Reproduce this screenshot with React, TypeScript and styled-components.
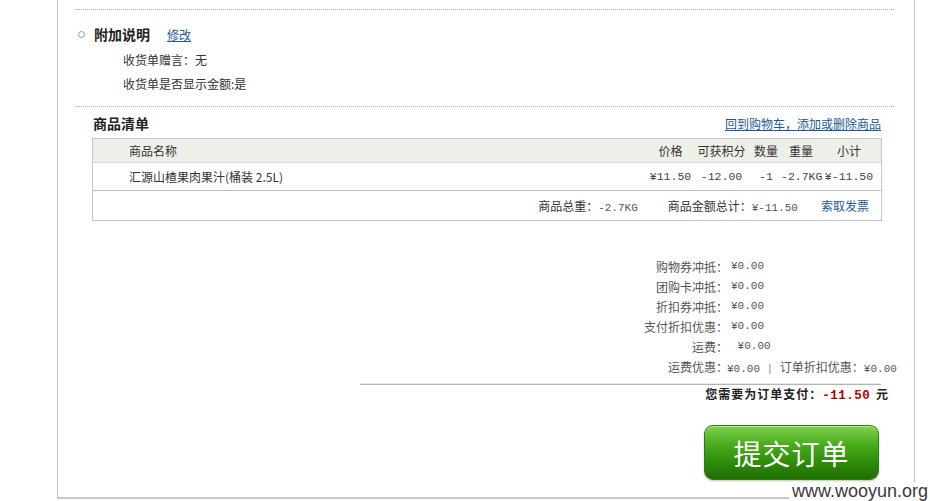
import React from 'react';
import styled, { createGlobalStyle } from 'styled-components';

const TEXT = '#333333';
const MUTED = '#555555';
const LINK = '#1d5a95';
const CJK = '"Noto Sans CJK SC", "Liberation Sans", sans-serif';
const NUM = '"Liberation Mono", "Noto Sans CJK SC", monospace';

const GlobalStyle = createGlobalStyle`
  html, body {
    margin: 0;
    padding: 0;
    background: #ffffff;
  }
  body {
    width: 930px;
    height: 501px;
    overflow: hidden;
    font-family: ${CJK};
    font-size: 12px;
    color: ${TEXT};
  }
`;

const summaryRows = [
  { label: '购物券冲抵：', value: '¥0.00' },
  { label: '团购卡冲抵：', value: '¥0.00' },
  { label: '折扣券冲抵：', value: '¥0.00' },
  { label: '支付折扣优惠：', value: '¥0.00' },
  { label: '运费：', value: ' ¥0.00' },
];

export default function App() {
  return (
    <Page>
      <GlobalStyle />
      <Panel>
        <Dotted />
        <NoteHead>
          <Bullet />
          <SectionTitle>附加说明</SectionTitle>
          <EditLink href="#">修改</EditLink>
        </NoteHead>
        <NoteBlock>
          <NoteLine>收货单赠言：无</NoteLine>
          <NoteLine>收货单是否显示金额:是</NoteLine>
        </NoteBlock>
        <Dotted $top={10} />

        <GoodsHead>
          <SectionTitle>商品清单</SectionTitle>
          <CartLink href="#">回到购物车，添加或删除商品</CartLink>
        </GoodsHead>

        <GoodsTable>
          <HeadRow>
            <NameCell>商品名称</NameCell>
            <Col $w={43}>价格</Col>
            <Col $w={59}>可获积分</Col>
            <Col $w={30}>数量</Col>
            <Col $w={40}>重量</Col>
            <Col $w={56}>小计</Col>
          </HeadRow>
          <ItemRow>
            <NameCell>汇源山楂果肉果汁(桶装 2.5L)</NameCell>
            <NumCol $w={43}>¥11.50</NumCol>
            <NumCol $w={59}>-12.00</NumCol>
            <NumCol $w={30}>-1</NumCol>
            <NumCol $w={40}>-2.7KG</NumCol>
            <NumCol $w={56}>¥-11.50</NumCol>
          </ItemRow>
          <TotalRow>
            <span>
              商品总重：<Num>-2.7KG</Num>
            </span>
            <span>
              商品金额总计：<Num>¥-11.50</Num>
            </span>
            <InvoiceLink href="#">索取发票</InvoiceLink>
          </TotalRow>
        </GoodsTable>

        <Summary>
          {summaryRows.map((r) => (
            <React.Fragment key={r.label}>
              <SumLabel>{r.label}</SumLabel>
              <SumValue>{r.value}</SumValue>
            </React.Fragment>
          ))}
          <SumLabel>运费优惠：</SumLabel>
          <SumValue $shift={-4}>
            ¥0.00 <Sep>|</Sep> <Cjk>订单折扣优惠：</Cjk>¥0.00
          </SumValue>
        </Summary>
        <Rule />
        <PayLine>
          您需要为订单支付：<PayAmount>-11.50</PayAmount> 元
        </PayLine>
        <SubmitRow>
          <SubmitButton type="button">提交订单</SubmitButton>
        </SubmitRow>
      </Panel>
      <Watermark>www.wooyun.org</Watermark>
    </Page>
  );
}

const Page = styled.div`
  position: relative;
  width: 930px;
  height: 501px;
  padding-left: 57px;
  box-sizing: border-box;
`;

const Panel = styled.div`
  width: 858px;
  height: 499px;
  box-sizing: border-box;
  border: 1px solid #c4c4c4;
  border-top: none;
  border-bottom: 2px solid #c8c8c8;
  display: flex;
  flex-direction: column;
`;

const Dotted = styled.div<{ $top?: number }>`
  margin: ${(p) => p.$top ?? 9}px 20px 0 17px;
  height: 0;
  border-top: 1px dotted #aaaaaa;
`;

const NoteHead = styled.div`
  display: flex;
  align-items: center;
  height: 22px;
  margin-top: 13px;
  padding-left: 20px;
`;

const Bullet = styled.span`
  width: 5px;
  height: 5px;
  border: 1px solid #999;
  border-radius: 50%;
  margin-right: 9px;
`;

const SectionTitle = styled.span`
  font-size: 14px;
  font-weight: 700;
  color: #222;
`;

const EditLink = styled.a`
  margin-left: 17px;
  color: ${LINK};
  font-size: 12px;
  text-decoration: underline;
`;

const NoteBlock = styled.div`
  padding: 3px 0 0 65px;
`;

const NoteLine = styled.div`
  height: 24px;
  line-height: 24px;
  color: ${TEXT};
`;

const GoodsHead = styled.div`
  display: flex;
  align-items: center;
  justify-content: space-between;
  height: 20px;
  margin: 6px 33px 0 35px;
`;

const CartLink = styled.a`
  color: ${LINK};
  text-decoration: underline;
`;

const GoodsTable = styled.div`
  margin: 5px 32px 0 34px;
  border: 1px solid #c6c6c6;
`;

const HeadRow = styled.div`
  display: flex;
  align-items: center;
  height: 23px;
  background: #efefe9;
  border-bottom: 1px solid #dcdcd6;
  padding-right: 4px;
`;

const ItemRow = styled.div`
  display: flex;
  align-items: center;
  height: 27px;
  border-bottom: 1px solid #bdbdbd;
  padding-right: 4px;
`;

const NameCell = styled.div`
  flex: 1;
  padding-left: 36px;
`;

const Col = styled.div<{ $w: number }>`
  width: ${(p) => p.$w}px;
  text-align: center;
`;

const NumCol = styled(Col)`
  font-family: ${NUM};
  font-size: 11.5px;
  color: #444;
`;

const Num = styled.span`
  font-family: ${NUM};
  font-size: 11px;
  color: #555;
`;

const TotalRow = styled.div`
  display: flex;
  align-items: center;
  justify-content: flex-end;
  gap: 30px;
  height: 29px;
  padding-right: 12px;
  color: ${TEXT};
`;

const InvoiceLink = styled.a`
  color: ${LINK};
  text-decoration: none;
  margin-left: -7px;
`;

const Summary = styled.div`
  display: grid;
  grid-template-columns: 670px auto;
  grid-auto-rows: 20px;
  align-items: center;
  margin-top: 35px;
  color: ${MUTED};
`;

const SumLabel = styled.div`
  text-align: right;
  white-space: nowrap;
`;

const SumValue = styled.div<{ $shift?: number }>`
  font-family: ${NUM};
  font-size: 11px;
  white-space: pre;
  padding-left: 3px;
  margin-left: ${(p) => p.$shift ?? 0}px;
`;

const Cjk = styled.span`
  font-family: ${CJK};
  font-size: 12px;
`;

const Sep = styled.span`
  color: #888;
`;

const Rule = styled.div`
  margin: 8px 33px 0 302px;
  height: 1px;
  background: #b4b4b4;
  box-shadow: 0 -1px 0 #ececec;
`;

const PayLine = styled.div`
  text-align: right;
  margin: -1px 25px 0 0;
  height: 20px;
  line-height: 20px;
  font-weight: 700;
  letter-spacing: 1px;
  color: #222;
`;

const PayAmount = styled.span`
  font-family: ${NUM};
  font-size: 12.5px;
  color: #aa0000;
  font-weight: 700;
  letter-spacing: 0.5px;
  margin-right: 2px;
`;

const SubmitRow = styled.div`
  display: flex;
  justify-content: flex-end;
  margin-top: 21px;
  padding-right: 35px;
`;

const SubmitButton = styled.button`
  width: 175px;
  height: 55px;
  border: 1px solid #2f7d10;
  border-radius: 9px;
  background: linear-gradient(#7fd04e 0%, #4aac1d 35%, #2d8a09 70%, #1f6f04 100%);
  box-shadow: inset 0 1px 0 #b6ec8c, 0 1px 2px rgba(0, 0, 0, 0.25);
  color: #ffffff;
  font-family: ${CJK};
  font-size: 28px;
  letter-spacing: 1px;
  cursor: pointer;
  padding: 0;
`;

const Watermark = styled.div`
  position: absolute;
  right: 2px;
  bottom: 0;
  padding-left: 3px;
  font-family: 'Liberation Sans', Arial, sans-serif;
  font-size: 18px;
  line-height: 19px;
  color: #3a3a3a;
  background: rgba(255, 255, 255, 0.85);
`;
